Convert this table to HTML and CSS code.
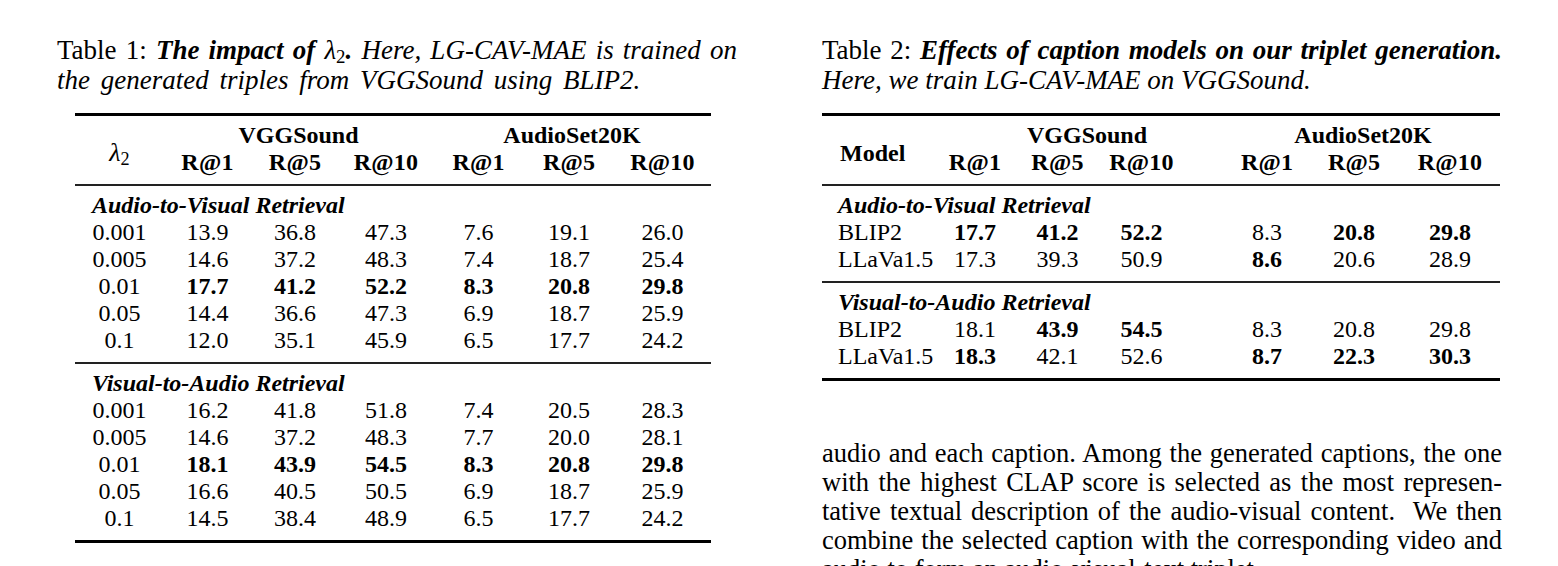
FILE: index.html
```html
<!DOCTYPE html>
<html lang="en">
<head>
<meta charset="utf-8">
<title>Tables</title>
<link rel="stylesheet" href="styles.css">
</head>
<body>
<div class="page">
  <section class="col">
    <p class="caption">
      <span class="line just">Table 1: <b><i>The impact of <span class="lam">λ<sub>2</sub></span>.</i></b> <i>Here, LG-CAV-MAE is trained on</i></span>
      <span class="line wide"><i>the generated triples from VGGSound using BLIP2.</i></span>
    </p>
    <table class="tbl tbl-left">
      <colgroup>
        <col class="w89"><col class="w87"><col class="w88"><col class="w94"><col class="w91"><col class="w90"><col class="w97">
      </colgroup>
      <thead>
        <tr class="h1">
          <th rowspan="2" class="lamh"><span class="lam">λ<sub>2</sub></span></th>
          <th colspan="3">VGGSound</th>
          <th colspan="3">AudioSet20K</th>
        </tr>
        <tr class="h2">
          <th>R@1</th><th>R@5</th><th>R@10</th><th>R@1</th><th>R@5</th><th>R@10</th>
        </tr>
      </thead>
      <tbody>
        <tr class="sec"><td colspan="7">Audio-to-Visual Retrieval</td></tr>
        <tr><td>0.001</td><td>13.9</td><td>36.8</td><td>47.3</td><td>7.6</td><td>19.1</td><td>26.0</td></tr>
        <tr><td>0.005</td><td>14.6</td><td>37.2</td><td>48.3</td><td>7.4</td><td>18.7</td><td>25.4</td></tr>
        <tr><td>0.01</td><td class="b">17.7</td><td class="b">41.2</td><td class="b">52.2</td><td class="b">8.3</td><td class="b">20.8</td><td class="b">29.8</td></tr>
        <tr><td>0.05</td><td>14.4</td><td>36.6</td><td>47.3</td><td>6.9</td><td>18.7</td><td>25.9</td></tr>
        <tr class="last"><td>0.1</td><td>12.0</td><td>35.1</td><td>45.9</td><td>6.5</td><td>17.7</td><td>24.2</td></tr>
      </tbody>
      <tbody>
        <tr class="sec"><td colspan="7">Visual-to-Audio Retrieval</td></tr>
        <tr><td>0.001</td><td>16.2</td><td>41.8</td><td>51.8</td><td>7.4</td><td>20.5</td><td>28.3</td></tr>
        <tr><td>0.005</td><td>14.6</td><td>37.2</td><td>48.3</td><td>7.7</td><td>20.0</td><td>28.1</td></tr>
        <tr><td>0.01</td><td class="b">18.1</td><td class="b">43.9</td><td class="b">54.5</td><td class="b">8.3</td><td class="b">20.8</td><td class="b">29.8</td></tr>
        <tr><td>0.05</td><td>16.6</td><td>40.5</td><td>50.5</td><td>6.9</td><td>18.7</td><td>25.9</td></tr>
        <tr class="last"><td>0.1</td><td>14.5</td><td>38.4</td><td>48.9</td><td>6.5</td><td>17.7</td><td>24.2</td></tr>
      </tbody>
    </table>
  </section>

  <section class="col">
    <p class="caption">
      <span class="line just">Table 2: <b><i>Effects of caption models on our triplet generation.</i></b></span>
      <span class="line"><i>Here, we train LG-CAV-MAE on VGGSound.</i></span>
    </p>
    <table class="tbl tbl-right">
      <colgroup>
        <col class="w112"><col class="w82"><col class="w83"><col class="w105"><col class="w104"><col class="w92"><col class="w100">
      </colgroup>
      <thead>
        <tr class="h1">
          <th rowspan="2" class="modelh">Model</th>
          <th colspan="3" class="vgg">VGGSound</th>
          <th colspan="3" class="aset">AudioSet20K</th>
        </tr>
        <tr class="h2">
          <th>R@1</th><th>R@5</th><th class="sl">R@10</th><th class="sr">R@1</th><th>R@5</th><th>R@10</th>
        </tr>
      </thead>
      <tbody>
        <tr class="sec"><td colspan="7">Audio-to-Visual Retrieval</td></tr>
        <tr><td class="name">BLIP2</td><td class="b">17.7</td><td class="b">41.2</td><td class="b sl">52.2</td><td class="sr">8.3</td><td class="b">20.8</td><td class="b">29.8</td></tr>
        <tr class="last"><td class="name">LLaVa1.5</td><td>17.3</td><td>39.3</td><td class="sl">50.9</td><td class="b sr">8.6</td><td>20.6</td><td>28.9</td></tr>
      </tbody>
      <tbody>
        <tr class="sec"><td colspan="7">Visual-to-Audio Retrieval</td></tr>
        <tr><td class="name">BLIP2</td><td>18.1</td><td class="b">43.9</td><td class="b sl">54.5</td><td class="sr">8.3</td><td>20.8</td><td>29.8</td></tr>
        <tr class="last"><td class="name">LLaVa1.5</td><td class="b">18.3</td><td>42.1</td><td class="sl">52.6</td><td class="b sr">8.7</td><td class="b">22.3</td><td class="b">30.3</td></tr>
      </tbody>
    </table>

    <p class="body">
      <span class="line just">audio and each caption. Among the generated captions, the one</span>
      <span class="line just">with the highest CLAP score is selected as the most represen-</span>
      <span class="line just">tative textual description of the audio-visual content.&nbsp; We then</span>
      <span class="line just">combine the selected caption with the corresponding video and</span>
      <span class="line">audio to form an audio-visual-text triplet.</span>
    </p>
  </section>
</div>
</body>
</html>
```

FILE: styles.css
```css
html, body {
  margin: 0;
  padding: 0;
  background: #fff;
}

body {
  font-family: "Liberation Serif", "Times New Roman", serif;
  color: #000;
}

.page {
  display: flex;
  gap: 85px;
  padding: 35px 0 0 57px;
  height: 566px;
  box-sizing: border-box;
  overflow: hidden;
}

.col {
  width: 680px;
  flex: none;
}

.caption {
  margin: 0;
  font-size: 27px;
  line-height: 30px;
}

.line {
  display: block;
  white-space: nowrap;
}

.just {
  text-align: justify;
  text-align-last: justify;
}

.wide {
  word-spacing: 4px;
}

.lam sub {
  font-size: 0.7em;
  line-height: 0;
  vertical-align: -0.22em;
  font-style: normal;
  font-weight: normal;
}

.caption .lam {
  font-weight: normal;
}

/* tables */
.tbl {
  border-collapse: collapse;
  table-layout: fixed;
  margin-top: 18px;
  font-size: 24px;
  line-height: 27px;
  border-top: 3px solid #000;
  border-bottom: 3px solid #000;
}

.tbl-left {
  width: 636px;
  margin-left: 18px;
}

.tbl-right {
  width: 678px;
}

.w82 { width: 82px; }
.w83 { width: 83px; }
.w87 { width: 87px; }
.w88 { width: 88px; }
.w89 { width: 89px; }
.w90 { width: 90px; }
.w91 { width: 91px; }
.w92 { width: 92px; }
.w94 { width: 94px; }
.w97 { width: 97px; }
.w100 { width: 100px; }
.w104 { width: 104px; }
.w105 { width: 105px; }
.w112 { width: 112px; }

.tbl th,
.tbl td {
  padding: 0;
  text-align: center;
  white-space: nowrap;
}

.tbl th {
  font-weight: bold;
}

.tbl thead {
  border-bottom: 2px solid #222;
}

.tbl tbody + tbody {
  border-top: 2px solid #222;
}

.tbl .h1 th {
  padding-top: 6px;
}

.tbl .h2 th {
  padding-bottom: 8px;
  letter-spacing: 0.2px;
}

.tbl th.lamh {
  font-weight: normal;
  font-style: italic;
}

.lamh .lam {
  font-family: "Liberation Serif", "DejaVu Serif", serif;
  font-size: 26px;
}

.tbl th.modelh {
  text-align: left;
  padding-left: 18px;
}

.tbl th.vgg {
  padding-left: 36px;
}

.tbl th.aset {
  padding-left: 22px;
}

.tbl .sec td {
  text-align: left;
  font-weight: bold;
  font-style: italic;
  padding-top: 6px;
  padding-left: 17px;
}

.tbl-right .sec td {
  padding-left: 16px;
}

.tbl .last td {
  padding-bottom: 8px;
}

.tbl td.name {
  text-align: left;
  padding-left: 16px;
}

.tbl .sl {
  padding-right: 20px;
}

.tbl .sr {
  padding-left: 22px;
}

.tbl td.b {
  font-weight: bold;
}

/* body text */
.body {
  margin: 58px 0 0;
  font-size: 26.5px;
  line-height: 29px;
}
```
